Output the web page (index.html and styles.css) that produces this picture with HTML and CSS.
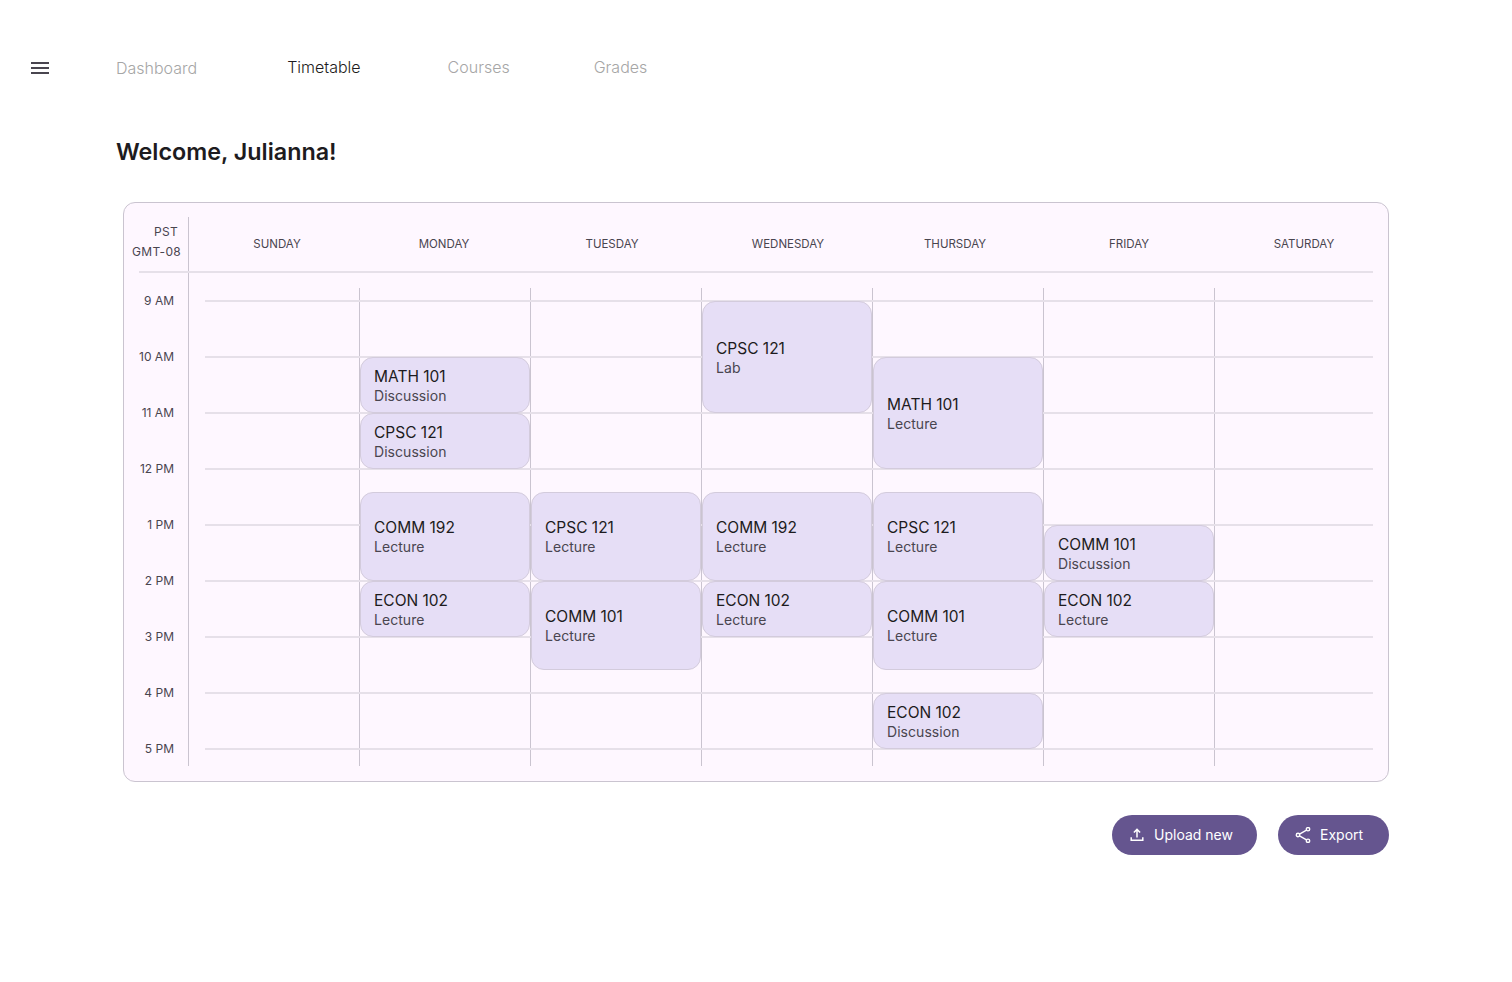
FILE: index.html
```html
<!DOCTYPE html>
<html lang="en">
<head>
<meta charset="utf-8">
<title>Timetable</title>
<link rel="stylesheet" href="styles.css">
</head>
<body>
<header class="topbar">
  <button class="menu" aria-label="Menu">
    <svg width="18" height="12" viewBox="0 0 18 12"><path d="M0 0h18v2H0zM0 5h18v2H0zM0 10h18v2H0z" fill="#49454f"/></svg>
  </button>
  <nav class="nav">
    <a class="nav-item nav-dash">Dashboard</a>
    <a class="nav-item nav-time active">Timetable</a>
    <a class="nav-item nav-courses">Courses</a>
    <a class="nav-item">Grades</a>
  </nav>
</header>
<main class="main">
  <h1 class="title">Welcome, Julianna!</h1>
  <section class="card">
    <div class="head">
      <div class="tz"><span>PST</span><span>GMT-08</span></div>
      <div class="days">
        <div class="day day-sun">SUNDAY</div>
        <div class="day day-mon">MONDAY</div>
        <div class="day day-tue">TUESDAY</div>
        <div class="day day-wed">WEDNESDAY</div>
        <div class="day day-thu">THURSDAY</div>
        <div class="day day-fri">FRIDAY</div>
        <div class="day day-sat">SATURDAY</div>
      </div>
    </div>
    <div class="board">
      <div class="axis"></div>

      <div class="vline c-mon"></div>
      <div class="vline c-tue"></div>
      <div class="vline c-wed"></div>
      <div class="vline c-thu"></div>
      <div class="vline c-fri"></div>
      <div class="vline c-sat"></div>

      <div class="hline r-9"></div>
      <div class="hline r-10"></div>
      <div class="hline r-11"></div>
      <div class="hline r-12"></div>
      <div class="hline r-13"></div>
      <div class="hline r-14"></div>
      <div class="hline r-15"></div>
      <div class="hline r-16"></div>
      <div class="hline r-17"></div>

      <div class="time r-9"><span>9 AM</span></div>
      <div class="time r-10"><span>10 AM</span></div>
      <div class="time r-11"><span>11 AM</span></div>
      <div class="time r-12"><span>12 PM</span></div>
      <div class="time r-13"><span>1 PM</span></div>
      <div class="time r-14"><span>2 PM</span></div>
      <div class="time r-15"><span>3 PM</span></div>
      <div class="time r-16"><span>4 PM</span></div>
      <div class="time r-17"><span>5 PM</span></div>

      <div class="event c-mon e-10-11"><b>MATH 101</b><span>Discussion</span></div>
      <div class="event c-mon e-11-12"><b>CPSC 121</b><span>Discussion</span></div>
      <div class="event c-mon e-125-14"><b>COMM 192</b><span>Lecture</span></div>
      <div class="event c-mon e-14-15"><b>ECON 102</b><span>Lecture</span></div>

      <div class="event c-tue e-125-14"><b>CPSC 121</b><span>Lecture</span></div>
      <div class="event c-tue e-14-155"><b>COMM 101</b><span>Lecture</span></div>

      <div class="event c-wed e-9-11"><b>CPSC 121</b><span>Lab</span></div>
      <div class="event c-wed e-125-14"><b>COMM 192</b><span>Lecture</span></div>
      <div class="event c-wed e-14-15"><b>ECON 102</b><span>Lecture</span></div>

      <div class="event c-thu e-10-12"><b>MATH 101</b><span>Lecture</span></div>
      <div class="event c-thu e-125-14"><b>CPSC 121</b><span>Lecture</span></div>
      <div class="event c-thu e-14-155"><b>COMM 101</b><span>Lecture</span></div>
      <div class="event c-thu e-16-17"><b>ECON 102</b><span>Discussion</span></div>

      <div class="event c-fri e-13-14"><b>COMM 101</b><span>Discussion</span></div>
      <div class="event c-fri e-14-15"><b>ECON 102</b><span>Lecture</span></div>
    </div>
  </section>
  <div class="actions">
    <button class="btn btn-upload">
      <svg width="14" height="14" viewBox="0 0 14 14" fill="none" stroke="#fff" stroke-width="1.5"><path d="M7 9.5V1.6M3.9 4.5 7 1.4l3.1 3.1M1.2 9.2v3.1h11.6V9.2"/></svg>
      <span>Upload new</span>
    </button>
    <button class="btn btn-export">
      <svg width="16" height="16" viewBox="0 0 16 16" fill="none" stroke="#fff" stroke-width="1.4"><circle cx="13" cy="2.2" r="1.7"/><circle cx="3" cy="8" r="1.7"/><circle cx="13" cy="13.8" r="1.7"/><path d="M4.5 7.1 11.5 3.1M4.5 8.9l7 4"/></svg>
      <span>Export</span>
    </button>
  </div>
</main>
</body>
</html>
```
FILE: styles.css
```css
* { box-sizing: border-box; }
html, body { margin: 0; padding: 0; background: #fff; }
body { width: 1512px; height: 982px; overflow: hidden; font-family: "Inter", "Liberation Sans", sans-serif; color: #1d1b20; }

.topbar { display: flex; align-items: center; height: 24px; margin-top: 56px; }
.menu { width: 18px; height: 12px; margin-left: 31px; padding: 0; border: 0; background: none; display: flex; }
.nav { display: flex; margin-left: 67px; padding-bottom: 2px; }
.nav-item { font-size: 16px; font-weight: 300; color: #a6a6a6; line-height: 24px; }
.nav-item.active { color: #1d1b20; }
.nav-dash { margin-right: 90px; padding-top: 1px; }
.nav-time { margin-right: 87px; }
.nav-courses { margin-right: 84px; }

.main { width: 1266px; margin: 0 0 0 123px; }
.title { margin: 54px 0 32px -7px; font-size: 23.3px; line-height: 36px; font-weight: 600; color: #1d1b20; }

.card { height: 580px; padding: 14px 15px 15px 0; background: #fef7ff; border: 1px solid #cac4d0; border-radius: 12px; }

.head { display: flex; height: 56px; border-bottom: 2px solid #e6e0e9; margin-left: 15px; }
.tz { flex: 0 0 50px; min-width: 0; padding: 0 7px 5px 0; border-right: 1px solid #cac4d0; display: flex; flex-direction: column; align-items: flex-end; justify-content: center; gap: 5px; font-size: 12px; line-height: 15px; letter-spacing: .3px; color: #49454f; white-space: nowrap; }
.tz span:first-child { padding-right: 3px; }
.days { flex: 1; min-width: 0; padding-top: 1px; display: grid; grid-template-columns: 176px 158px 178px 174px 160px 188px 162px; font-size: 11.5px; line-height: 15px; color: #49454f; align-items: center; text-align: center; }

.board {
  display: grid;
  grid-template-columns: 65px 170px 171px 171px 171px 171px 171px 1fr;
  grid-template-rows: 15px 13px 56px 56px 56px 23px 33px 56px 56px 33px 23px 56px 17px;
  height: 493px;
}
.axis { grid-column: 1; grid-row: 1 / -1; border-right: 1px solid #cac4d0; }

.vline { grid-row: 2 / -1; border-left: 1px solid #cac4d0; }
.c-mon { grid-column: 3; }
.c-tue { grid-column: 4; }
.c-wed { grid-column: 5; }
.c-thu { grid-column: 6; }
.c-fri { grid-column: 7; }
.c-sat { grid-column: 8; }

.r-9 { grid-row-start: 3; }
.r-10 { grid-row-start: 4; }
.r-11 { grid-row-start: 5; }
.r-12 { grid-row-start: 6; }
.r-13 { grid-row-start: 8; }
.r-14 { grid-row-start: 9; }
.r-15 { grid-row-start: 10; }
.r-16 { grid-row-start: 12; }
.r-17 { grid-row-start: 13; }

.hline { grid-column: 2 / -1; height: 2px; margin: -1px 0 0 16px; background: #e6e0e9; }

.time { grid-column: 1; height: 0; padding-right: 15px; display: flex; align-items: center; justify-content: flex-end; font-size: 12px; color: #49454f; white-space: nowrap; margin-top: -1px; }

.event { margin-left: 1px; padding-left: 13px; display: flex; flex-direction: column; justify-content: center; background: #e6def6; border: 1px solid #d3cbdc; border-radius: 13px; }
.event b { font-size: 15.5px; line-height: 22px; font-weight: 400; color: #1d1b20; }
.event span { margin-top: -1px; font-size: 14px; line-height: 18px; letter-spacing: .05px; color: #49454f; }

.e-10-11 { grid-row: 4 / 5; }
.e-11-12 { grid-row: 5 / 6; }
.e-125-14 { grid-row: 7 / 9; }
.e-14-15 { grid-row: 9 / 10; }
.e-14-155 { grid-row: 9 / 11; }
.e-9-11 { grid-row: 3 / 5; }
.e-10-12 { grid-row: 4 / 6; }
.e-16-17 { grid-row: 12 / 13; }
.e-13-14 { grid-row: 8 / 9; }

.actions { display: flex; justify-content: flex-end; gap: 21px; margin-top: 33px; }
.btn { height: 40px; display: flex; align-items: center; border: 0; border-radius: 20px; background: #65558f; color: #fff; font-family: inherit; font-size: 14px; line-height: 18px; }
.btn-upload { width: 145px; padding-left: 18px; gap: 10px; }
.btn-export { width: 111px; padding-left: 17px; gap: 9px; }
```
